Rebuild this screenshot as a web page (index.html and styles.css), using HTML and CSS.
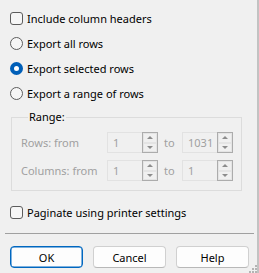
FILE: index.html
```html
<!DOCTYPE html>
<html lang="en">
<head>
    <meta charset="UTF-8">
    <title>Export</title>
    <link rel="stylesheet" href="styles.css">
</head>
<body>
<div class="dialog">
    <div class="opts">
        <label class="row"><span class="check"></span>Include column headers</label>
        <label class="row"><span class="radio"></span>Export all rows</label>
        <label class="row"><span class="radio on"></span>Export selected rows</label>
        <label class="row"><span class="radio"></span>Export a range of rows</label>
    </div>

    <fieldset class="range">
        <legend>Range:</legend>
        <div class="spinrow">
            <span class="lbl">Rows: from</span>
            <span class="spinbox"><span class="val">1</span><span class="spin"><i class="up"></i><i class="down"></i></span></span>
            <span class="to">to</span>
            <span class="spinbox"><span class="val">1031</span><span class="spin"><i class="up"></i><i class="down"></i></span></span>
        </div>
        <div class="spinrow">
            <span class="lbl">Columns: from</span>
            <span class="spinbox"><span class="val">1</span><span class="spin"><i class="up"></i><i class="down"></i></span></span>
            <span class="to">to</span>
            <span class="spinbox"><span class="val">1</span><span class="spin"><i class="up"></i><i class="down"></i></span></span>
        </div>
    </fieldset>

    <label class="row paginate"><span class="check"></span>Paginate using printer settings</label>

    <div class="sep"></div>

    <div class="buttons">
        <button class="btn default">OK</button>
        <button class="btn">Cancel</button>
        <button class="btn">Help</button>
    </div>
    <svg class="grip" width="9" height="9" viewBox="0 0 9 9">
        <rect x="7" y="1" width="2" height="2" fill="#b4b4b4"/>
        <rect x="4" y="4" width="2" height="2" fill="#b4b4b4"/>
        <rect x="7" y="4" width="2" height="2" fill="#b4b4b4"/>
        <rect x="1" y="7" width="2" height="2" fill="#b4b4b4"/>
        <rect x="4" y="7" width="2" height="2" fill="#b4b4b4"/>
        <rect x="7" y="7" width="2" height="2" fill="#b4b4b4"/>
    </svg>
</div>
</body>
</html>
```

FILE: styles.css
```css
*{
    margin: 0;
    padding: 0;
    box-sizing: border-box;
}
html,body{
    width: 259px;
    height: 273px;
    overflow: hidden;
}
body{
    background-color: #f0f0f0;
    font-family: "Noto Sans", "Liberation Sans", sans-serif;
    font-size: 11px;
    color: #000;
}
.dialog{
    position: relative;
    width: 259px;
    height: 273px;
    padding: 6px 0 0 10px;
    border-right: 2px solid #c2c2c2;
}
.row{
    display: flex;
    align-items: center;
    height: 25px;
    white-space: nowrap;
}
.check{
    width: 13px;
    height: 13px;
    margin-right: 4px;
    border: 1px solid #5c5c5c;
    border-radius: 3px;
    background-color: #f6f6f6;
}
.radio{
    width: 13px;
    height: 13px;
    margin-right: 4px;
    border: 1px solid #5c5c5c;
    border-radius: 50%;
    background-color: #f6f6f6;
}
.radio.on{
    border: 4px solid #005fb8;
    background-color: #fff;
}
.range{
    width: 231px;
    margin: 3px 0 0 1px;
    padding: 7px 0 9px 9px;
    border: 1px solid #dcdcdc;
}
.range legend{
    margin-left: 7px;
    padding: 0 1px;
    line-height: 16px;
}
.spinrow{
    display: flex;
    align-items: center;
    height: 21px;
    color: #a0a0a0;
}
.spinrow + .spinrow{
    margin-top: 7px;
}
.lbl{
    width: 86px;
}
.spinbox{
    display: flex;
    height: 21px;
}
.val{
    width: 35px;
    padding-left: 5px;
    line-height: 19px;
    border: 1px solid #e2e2e2;
    border-right: none;
    background-color: #f0f0f0;
}
.spin{
    display: flex;
    flex-direction: column;
    width: 16px;
    border: 1px solid #acacac;
}
.spin i{
    flex: 1;
    display: flex;
    align-items: center;
    justify-content: center;
    border: 1px solid #e4e4e4;
    background-color: #f0f0f0;
}
.spin i::after{
    content: "";
    border-left: 3px solid transparent;
    border-right: 3px solid transparent;
}
.spin .up::after{
    border-bottom: 3px solid #8c8c8c;
}
.spin .down::after{
    border-top: 3px solid #8c8c8c;
}
.to{
    width: 24px;
    padding-left: 6px;
}
.paginate{
    margin-top: 9px;
}
.sep{
    width: 249px;
    height: 1px;
    margin: 8px 0 0 -5px;
    background-color: #a0a0a0;
}
.buttons{
    display: flex;
    gap: 10px;
    margin-top: 12px;
}
.btn{
    width: 73px;
    height: 22px;
    font-family: inherit;
    font-size: 11px;
    color: #000;
    background-color: #fdfdfd;
    border: 1px solid #d0d0d0;
    border-bottom-color: #b8b8b8;
    border-radius: 4px;
}
.btn.default{
    border: 1px solid #0067c0;
    box-shadow: inset 0 0 0 0.5px #0067c0;
}
.grip{
    position: absolute;
    right: 0;
    bottom: 0;
}
```
